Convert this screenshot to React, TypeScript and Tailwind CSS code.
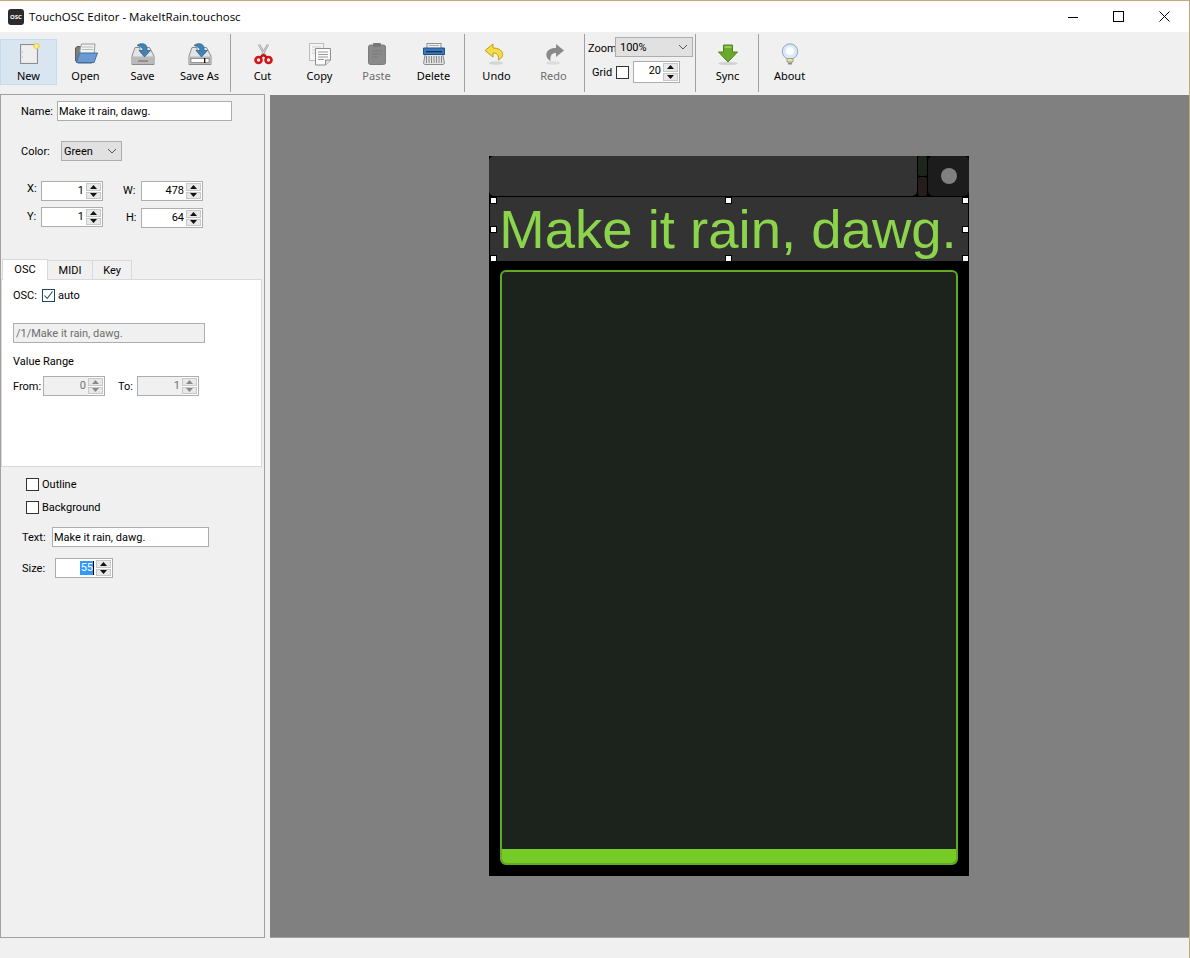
import React from "react";

const BTN_LABEL = "text-[11px] leading-[14px] text-center";
// pushes a label down 1px inside a centered row
const TXT = "pt-[2px]";

function Arrow({ up, off }: { up?: boolean; off?: boolean }) {
  return (
    <svg width="7" height="4" viewBox="0 0 7 4" className="block">
      <path d={up ? "M3.5 0L7 4H0Z" : "M0 0H7L3.5 4Z"} fill={off ? "#8a8a8a" : "#111"} />
    </svg>
  );
}

function Spin({ value, className, disabled, selected }: { value: string; className: string; disabled?: boolean; selected?: boolean }) {
  return (
    <div className={`flex h-5 border border-[#adadad] ${disabled ? "bg-[#f0f0f0] text-[#707070]" : "bg-white text-black"} ${className}`}>
      <div className="flex-1 text-right text-[11px] leading-[18px] pr-[2px]">
        {selected ? <span className="bg-[#3399ff] text-white border-r border-black inline-block h-[14px] leading-[14px] pl-px">{value}</span> : value}
      </div>
      <div className="w-[16px] flex flex-col gap-[1px] p-[1px] pl-0 bg-white">
        <div className="flex-1 bg-[#e8e8e8] border border-[#c8c8c8] flex items-center justify-center"><Arrow up off={disabled} /></div>
        <div className="flex-1 bg-[#e8e8e8] border border-[#c8c8c8] flex items-center justify-center"><Arrow off={disabled} /></div>
      </div>
    </div>
  );
}

function Check({ checked }: { checked?: boolean }) {
  return (
    <div className={`w-[13px] h-[13px] border ${checked ? "border-[#1f4566]" : "border-[#333]"} bg-white flex items-center justify-center`}>
      {checked && (
        <svg width="11" height="11" viewBox="0 0 11 11">
          <path d="M1.5 5.5L4.2 8.5L9.5 1.5" fill="none" stroke="#1f4566" strokeWidth="1.1" />
        </svg>
      )}
    </div>
  );
}

function Chevron() {
  return (
    <svg width="10" height="6" viewBox="0 0 10 6">
      <path d="M1 1L5 5L9 1" fill="none" stroke="#555" strokeWidth="1" />
    </svg>
  );
}

function Icon({ children }: { children: React.ReactNode }) {
  return (
    <svg width="24" height="24" viewBox="0 0 24 24" className="block">
      {children}
    </svg>
  );
}

function Disk({ slot }: { slot?: boolean }) {
  return (
    <>
      <path d="M4 5.5H9V9H15V5.5H18.5L23 14V22.5H1V14Z" fill="#e4e4e4" stroke="#8b8b8b" />
      <rect x="1.5" y="14.5" width="21" height="7.5" fill="#b9b9b9" />
      {slot ? (
        <>
          <rect x="3" y="16.5" width="18" height="4" fill="#fff" stroke="#666" strokeWidth="0.6" />
          <rect x="16" y="16" width="1.3" height="5" fill="#111" />
        </>
      ) : (
        <rect x="7" y="18" width="10" height="2" fill="#8f8f8f" />
      )}
      <path d="M6 3.5C9 0.5 16 1 16 6V8.5H19.5L13.5 15L8 8.5H12C12 6 9.5 4.5 6 3.5Z" fill="#3f83b6" stroke="#2a5f8c" strokeWidth="0.7" />
    </>
  );
}

const icons: Record<string, React.ReactNode> = {
  New: (
    <Icon>
      <rect x="3.5" y="2.5" width="17" height="19" fill="#e6e6e6" stroke="#8e8e8e" />
      <rect x="5" y="4" width="14" height="16" fill="#eeeeee" />
      <circle cx="5.5" cy="10" r="0.5" fill="#999" />
      <circle cx="5.5" cy="15" r="0.5" fill="#999" />
      <circle cx="19.5" cy="4" r="2.7" fill="#f7ee8a" stroke="#e6c93c" />
    </Icon>
  ),
  Open: (
    <Icon>
      <path d="M1.5 6V19L4 21H18V6H10L8.5 4.5H3Z" fill="#7d7d7d" stroke="#5e5e5e" />
      <path d="M6 8L7.5 2H21L20 12H6Z" fill="#f3f3f3" stroke="#9a9a9a" />
      <path d="M8 5H19M8 7.5H19" stroke="#aaa" strokeWidth="0.8" />
      <path d="M5.5 11H23.5L20 20.5H2.5Z" fill="#6b9ad2" stroke="#3d6ea8" />
    </Icon>
  ),
  Save: <Icon><Disk /></Icon>,
  "Save As": <Icon><Disk slot /></Icon>,
  Cut: (
    <Icon>
      <path d="M8 2.5L14.5 14M17 2.5L10.5 14" stroke="#a3a3a3" strokeWidth="2.4" fill="none" />
      <path d="M8 2.5L14.5 14M17 2.5L10.5 14" stroke="#e2e2e2" strokeWidth="0.8" fill="none" />
      <circle cx="7.5" cy="18" r="3" fill="none" stroke="#d5121a" strokeWidth="2.6" />
      <circle cx="17.5" cy="18" r="3" fill="none" stroke="#d5121a" strokeWidth="2.6" />
      <path d="M9 15.5L12.5 13L16 15.5" fill="none" stroke="#c1121a" strokeWidth="2.4" />
    </Icon>
  ),
  Copy: (
    <Icon>
      <rect x="1.5" y="1.5" width="14" height="17" fill="#f4f4f4" stroke="#bdbdbd" />
      <path d="M4 5H13M4 8H13M4 11H13" stroke="#d0d0d0" />
      <path d="M7.5 6.5H22.5V18L17.5 23H7.5Z" fill="#fbfbfb" stroke="#8e8e8e" />
      <path d="M10 10H20M10 12.5H20M10 15H20M10 17.5H16" stroke="#9c9c9c" />
      <path d="M17.5 23V18H22.5" fill="#e2e2e2" stroke="#8e8e8e" />
    </Icon>
  ),
  Paste: (
    <Icon>
      <rect x="3.5" y="3" width="17" height="19.5" rx="2" fill="#8a8a8a" stroke="#7c7c7c" />
      <rect x="8" y="1" width="8" height="4" rx="1" fill="#777" />
      <path d="M7 9H17M7 12H17M7 15H14" stroke="#7a7a7a" />
    </Icon>
  ),
  Delete: (
    <Icon>
      <path d="M4 8H20L22.5 21.5L21 22.5H3L1.5 21.5Z" fill="#e3e3e3" stroke="#8b8b8b" />
      <path d="M4.5 14V21M7 14V21M9.5 14V21M12 14V21M14.5 14V21M17 14V21M19.5 14V21" stroke="#888" />
      <rect x="5" y="1.5" width="14" height="5" fill="#f2f2f2" stroke="#909090" />
      <path d="M7 3.5H17" stroke="#aaa" />
      <path d="M1.5 6H22.5V12.5H1.5Z" fill="#3a78b8" stroke="#21518a" />
      <rect x="4" y="9" width="16" height="1.3" fill="#12345c" />
    </Icon>
  ),
  Undo: (
    <Icon>
      <ellipse cx="11" cy="21" rx="7" ry="1.8" fill="#d4d4d4" />
      <path d="M8 2L0 8.5L8 15V11C12 11 14 13 13.5 18C17 16 18 14 17.5 11.5C17 8 13 6 8 6Z" fill="#f5dc4a" stroke="#bf9c10" />
    </Icon>
  ),
  Redo: (
    <Icon>
      <ellipse cx="11" cy="21" rx="7" ry="1.8" fill="#dcdcdc" />
      <path d="M14 2L22 8.5L14 15V11C10 11 8 13 8.5 19C5 17 4 14 4.5 11.5C5 8 9 6 14 6Z" fill="#8a8a8a" />
    </Icon>
  ),
  Sync: (
    <Icon>
      <ellipse cx="12" cy="21.5" rx="10" ry="1.6" fill="#d2d2d2" />
      <path d="M7.5 3H16.5V10H21.5L12 20L2.5 10H7.5Z" fill="#6aa92c" stroke="#4c861c" />
      <path d="M8.5 4H15.5V6H8.5Z" fill="#9ccc58" />
    </Icon>
  ),
  About: (
    <Icon>
      <circle cx="12" cy="9.5" r="7.7" fill="#dbe8f7" stroke="#8ba6c6" />
      <circle cx="12" cy="9" r="4" fill="#fbfdff" />
      <path d="M9 16.5H15V20H9Z" fill="#e6dfb0" stroke="#a39e7a" />
      <path d="M10 20.5H14V22.5H10Z" fill="#8d8d8d" />
    </Icon>
  ),
};

function ToolButton({ label, active, disabled }: { label: string; active?: boolean; disabled?: boolean }) {
  return (
    <div className={`w-[57px] h-[46px] shrink-0 border flex flex-col items-center pt-[2px] ${active ? "bg-[#d9e6f2] border-[#c2dcf2]" : "border-transparent"}`}>
      {icons[label]}
      <div className={`${BTN_LABEL} mt-[3px] ${disabled ? "text-[#6d6d6d]" : "text-black"}`}>{label}</div>
    </div>
  );
}

function Sep({ className }: { className: string }) {
  return <div className={`w-px h-[58px] bg-[#a0a0a0] shrink-0 -mt-[5px] ${className}`} />;
}

function Handle({ className }: { className: string }) {
  return <div className={`absolute w-[7px] h-[7px] bg-white border border-black ${className}`} />;
}

export default function App() {
  return (
    <div className="w-[1190px] h-[958px] overflow-hidden flex flex-col bg-[#f0f0f0] text-black border-t border-r border-[#c9a77e] font-['Noto_Sans','Open_Sans',sans-serif] text-[11px]">
      {/* title bar */}
      <div className="h-[31px] bg-white flex items-center shrink-0">
        <div className="ml-[8px] w-4 h-4 rounded-[3px] bg-[#2b2b2b] flex items-center justify-center text-white text-[6px] font-bold leading-none">OSC</div>
        <div className="ml-[5px] text-[11.5px] leading-4 flex-1 font-['Open_Sans',sans-serif]">TouchOSC Editor - MakeItRain.touchosc</div>
        <svg width="10" height="10" viewBox="0 0 10 10" className="mr-[35px]"><path d="M0 5.5H10" stroke="#000" /></svg>
        <svg width="11" height="11" viewBox="0 0 11 11" className="mr-[35px]"><rect x="0.5" y="0.5" width="10" height="10" fill="none" stroke="#000" /></svg>
        <svg width="11" height="11" viewBox="0 0 11 11" className="mr-[19px]"><path d="M0.5 0.5L10.5 10.5M10.5 0.5L0.5 10.5" stroke="#000" /></svg>
      </div>

      {/* toolbar */}
      <div className="h-[63px] shrink-0 flex items-start pt-[7px] bg-[#f0f0f0]">
        <ToolButton label="New" active />
        <ToolButton label="Open" />
        <ToolButton label="Save" />
        <ToolButton label="Save As" />
        <Sep className="ml-[2px]" />
        <div className="w-[3px] shrink-0" />
        <ToolButton label="Cut" />
        <ToolButton label="Copy" />
        <ToolButton label="Paste" disabled />
        <ToolButton label="Delete" />
        <Sep className="ml-[2px]" />
        <div className="w-[3px] shrink-0" />
        <ToolButton label="Undo" />
        <ToolButton label="Redo" disabled />
        <Sep className="ml-[2px]" />
        <div className="w-[110px] shrink-0 -mt-[2px] font-['Roboto',sans-serif]">
          <div className="flex items-center h-5 pl-[3px]">
            <span className={`w-[27px] leading-none ${TXT}`}>Zoom</span>
            <div className="w-[78px] h-5 bg-[#e1e1e1] border border-[#adadad] flex items-center justify-between pl-[4px] pr-[4px]">
              <span className={TXT}>100%</span>
              <Chevron />
            </div>
          </div>
          <div className="flex items-center h-[22px] mt-[4px] pl-[7px]">
            <span className="w-[24px] leading-none">Grid</span>
            <Check />
            <Spin value="20" className="w-[47px] ml-[4px] !h-[22px]" />
          </div>
        </div>
        <Sep className="" />
        <div className="w-[3px] shrink-0" />
        <ToolButton label="Sync" />
        <div className="w-[2px] shrink-0" />
        <Sep className="" />
        <div className="w-[2px] shrink-0" />
        <ToolButton label="About" />
      </div>

      {/* main */}
      <div className="flex-1 flex min-h-0">
        <div className="w-[265px] shrink-0 border-x border-b border-[#a0a0a0] border-t border-t-[#a0a0a0] -mt-px font-['Roboto',sans-serif]">
          <div className="flex items-center h-5 mt-[6px] pl-[20px]">
            <span className={`w-[36px] ${TXT}`}>Name:</span>
            <div className="w-[175px] h-5 border border-[#adadad] bg-white pl-[1px] leading-[20px]">Make it rain, dawg.</div>
          </div>
          <div className="flex items-center h-5 mt-[20px] pl-[20px]">
            <span className={`w-[40px] ${TXT}`}>Color:</span>
            <div className="w-[61px] h-5 bg-[#e1e1e1] border border-[#adadad] flex items-center justify-between pl-[2px] pr-[4px]">
              <span className={TXT}>Green</span>
              <Chevron />
            </div>
          </div>
          <div className="flex items-center h-5 mt-[20px] pl-[26px]">
            <span className="w-[14px] -mt-[4px]">X:</span>
            <Spin value="1" className="w-[62px]" />
            <span className="ml-[20px] w-[18px]">W:</span>
            <Spin value="478" className="w-[62px]" />
          </div>
          <div className="flex items-center h-5 mt-[6px] pl-[26px]">
            <span className="w-[14px]">Y:</span>
            <Spin value="1" className="w-[62px]" />
            <span className="ml-[20px] w-[18px] pl-[3px] mt-[2px]">H:</span>
            <Spin value="64" className="w-[62px] mt-[2px]" />
          </div>

          {/* tabs */}
          <div className="flex items-end h-[21px] mt-[31px] pl-[1px]">
            <div className="w-[46px] h-[21px] bg-white border border-b-0 border-[#d9d9d9] text-center leading-[19px] relative z-10 -mb-px">OSC</div>
            <div className="w-[45px] h-[19px] bg-[#f0f0f0] border border-l-0 border-b-0 border-[#d9d9d9] text-center leading-[19px]">MIDI</div>
            <div className="w-[39px] h-[19px] bg-[#f0f0f0] border border-l-0 border-b-0 border-[#d9d9d9] text-center leading-[19px]">Key</div>
          </div>
          <div className="w-[261px] h-[188px] bg-white border border-[#d9d9d9]">
            <div className="flex items-center h-[14px] mt-[8px] pl-[11px]">
              <span className={`w-[29px] ${TXT}`}>OSC:</span>
              <Check checked />
              <span className={`ml-[3px] ${TXT}`}>auto</span>
            </div>
            <div className="ml-[11px] mt-[21px] w-[192px] h-5 border border-[#adadad] bg-[#f0f0f0] text-[#6d6d6d] pl-[2px] leading-[20px]">/1/Make it rain, dawg.</div>
            <div className="ml-[11px] mt-[11px] leading-[16px]">Value Range</div>
            <div className="flex items-center h-5 mt-[6px] pl-[11px]">
              <span className={`w-[30px] ${TXT}`}>From:</span>
              <Spin value="0" className="w-[62px]" disabled />
              <span className={`ml-[13px] w-[19px] ${TXT}`}>To:</span>
              <Spin value="1" className="w-[62px]" disabled />
            </div>
          </div>

          <div className="flex items-center h-[13px] mt-[11px] pl-[25px]">
            <Check />
            <span className={`ml-[3px] ${TXT}`}>Outline</span>
          </div>
          <div className="flex items-center h-[13px] mt-[10px] pl-[25px]">
            <Check />
            <span className={`ml-[3px] ${TXT}`}>Background</span>
          </div>
          <div className="flex items-center h-5 mt-[13px] pl-[21px]">
            <span className={`w-[30px] ${TXT}`}>Text:</span>
            <div className="w-[157px] h-5 border border-[#adadad] bg-white pl-[1px] leading-[20px]">Make it rain, dawg.</div>
          </div>
          <div className="flex items-center h-5 mt-[11px] pl-[21px]">
            <span className={`w-[33px] ${TXT}`}>Size:</span>
            <Spin value="55" className="w-[58px]" selected />
          </div>
        </div>

        <div className="w-[5px] shrink-0" />

        {/* canvas */}
        <div className="flex-1 bg-[#808080] flex justify-center pt-[61px] pr-px border-b border-b-[#a0a0a0]">
          <div className="w-[480px] h-[720px] bg-black flex flex-col">
            <div className="h-[40px] flex shrink-0">
              <div className="w-[428px] bg-[#333333] rounded-b-[5px] rounded-tl-[5px]" />
              <div className="w-[9px] ml-px mr-px flex flex-col gap-px">
                <div className="flex-1 bg-[#1c261d] rounded-[2px]" />
                <div className="flex-1 bg-[#261c1c] rounded-[2px]" />
              </div>
              <div className="flex-1 bg-[#1c1c1c] rounded-[5px] flex items-center justify-center">
                <div className="w-4 h-4 rounded-full bg-[#808080]" />
              </div>
            </div>
            <div className="relative h-[64px] mt-px mx-px pr-[2px] bg-[#333333] text-center text-[54.5px] leading-[66px] text-[#8cd44c] font-['Liberation_Sans',sans-serif] whitespace-nowrap">
              Make it rain, dawg.
              <Handle className="left-0 top-0" />
              <Handle className="left-[235px] top-0" />
              <Handle className="-right-[1px] top-0" />
              <Handle className="left-0 top-[29px]" />
              <Handle className="-right-[1px] top-[29px]" />
              <Handle className="left-0 -bottom-[1px]" />
              <Handle className="left-[235px] -bottom-[1px]" />
              <Handle className="-right-[1px] -bottom-[1px]" />
            </div>
            <div className="mt-[9px] ml-[11px] w-[458px] h-[595px] bg-[#1c231c] border-2 border-[#62aa23] rounded-[6px] flex flex-col justify-end overflow-hidden">
              <div className="h-[14px] bg-[#76cc26]" />
            </div>
          </div>
        </div>
      </div>
      <div className="h-[20px] shrink-0 bg-[#f0f0f0]" />
    </div>
  );
}
